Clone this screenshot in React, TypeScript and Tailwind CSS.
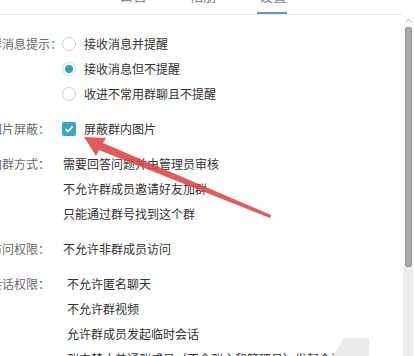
import React from "react";

const font = { fontFamily: '"Noto Sans CJK SC", "Noto Sans", sans-serif' };

function Radio({ checked }: { checked?: boolean }) {
  if (checked) {
    return (
      <span className="w-[14px] h-[14px] rounded-full border border-[#bfe0ea] bg-white flex items-center justify-center">
        <span className="w-[8px] h-[8px] rounded-full bg-[#3a9fb9]" />
      </span>
    );
  }
  return <span className="w-[14px] h-[14px] rounded-full border border-[#cfcfcf] bg-white" />;
}

function Checkbox() {
  return (
    <span className="w-[14px] h-[14px] rounded-[2px] bg-[#3ba5c4] flex items-center justify-center">
      <svg width="10" height="10" viewBox="0 0 10 10">
        <path d="M1.5 5.2 L4 7.6 L8.6 2.4" fill="none" stroke="#fff" strokeWidth="1.6" />
      </svg>
    </span>
  );
}

function Section({ label, children }: { label: string; children: React.ReactNode }) {
  return (
    <div className="flex">
      <div className="w-[72px] shrink-0 h-[25px] flex items-center text-[#6a6a6a] whitespace-nowrap">{label}</div>
      <div className="flex flex-col">{children}</div>
    </div>
  );
}

function Line({ children, className = "" }: { children: React.ReactNode; className?: string }) {
  return <div className={"h-[25px] flex items-center whitespace-nowrap " + className}>{children}</div>;
}

export default function App() {
  return (
    <div className="w-[414px] h-[356px] relative overflow-hidden bg-white text-[12px] text-[#333]" style={font}>
      <div className="flex h-full">
        <div className="flex-1 flex flex-col">
          {/* tabs */}
          <div className="h-[15px] shrink-0 border-b border-[#e8e8e8] relative flex items-start">
            <div className="flex gap-[40px] pl-[118px] -mt-[15px] text-[14px] leading-[20px] text-[#888]">
              <div className="w-[30px] text-center">公告</div>
              <div className="w-[30px] text-center">相册</div>
              <div className="w-[30px] text-center">设置</div>
            </div>
            <div className="absolute left-[257px] top-[12px] w-[30px] h-[2px] bg-[#5c9ba8]" />
          </div>

          {/* settings */}
          <div className="flex flex-col gap-[10px] pt-[16px] -ml-[10px]">
            <Section label="群消息提示：">
              <Line className="gap-[8px]"><Radio />接收消息并提醒</Line>
              <Line className="gap-[8px]"><Radio checked />接收消息但不提醒</Line>
              <Line className="gap-[8px]"><Radio />收进不常用群聊且不提醒</Line>
            </Section>
            <Section label="图片屏蔽：">
              <Line className="gap-[8px]"><Checkbox />屏蔽群内图片</Line>
            </Section>
            <Section label="加群方式：">
              <Line className="pl-[1px]">需要回答问题并由管理员审核</Line>
              <Line className="pl-[1px]">不允许群成员邀请好友加群</Line>
              <Line className="pl-[1px]">只能通过群号找到这个群</Line>
            </Section>
            <Section label="访问权限：">
              <Line className="pl-[1px]">不允许非群成员访问</Line>
            </Section>
            <Section label="会话权限：">
              <Line className="pl-[5px]">不允许匿名聊天</Line>
              <Line className="pl-[5px]">不允许群视频</Line>
              <Line className="pl-[5px]">允许群成员发起临时会话</Line>
              <Line className="pl-[5px]">群内禁止普通群成员（不含群主和管理员）发起会话</Line>
            </Section>
          </div>
        </div>

        {/* scrollbar */}
        <div className="w-[12px] shrink-0 flex flex-col items-center bg-white">
          <div className="h-[27px] flex items-end pb-[4px]">
            <svg width="7" height="5" viewBox="0 0 7 5">
              <path d="M0.5 4.5 L3.5 1 L6.5 4.5" fill="none" stroke="#b5b5b5" strokeWidth="1" />
            </svg>
          </div>
          <div className="w-[7px] h-[240px] rounded-[2px] bg-[#a9a9a9] border border-[#959595]" />
          <div className="w-[10px] flex-1 bg-[#ededed]" />
        </div>
      </div>

      {/* watermark corner */}
      <div className="absolute left-[333px] top-[338px] w-[36px] h-[18px] bg-[#ebebeb] [clip-path:polygon(30%_0,100%_0,100%_100%,0_100%)]" />

      {/* red arrow */}
      <svg className="absolute left-0 top-0 pointer-events-none" width="414" height="356">
        <polygon
          points="84,137 106,138 103,143 271,215 270,218 99,150 96,156"
          fill="#e04848"
          fillOpacity="0.9"
        />
      </svg>
    </div>
  );
}
